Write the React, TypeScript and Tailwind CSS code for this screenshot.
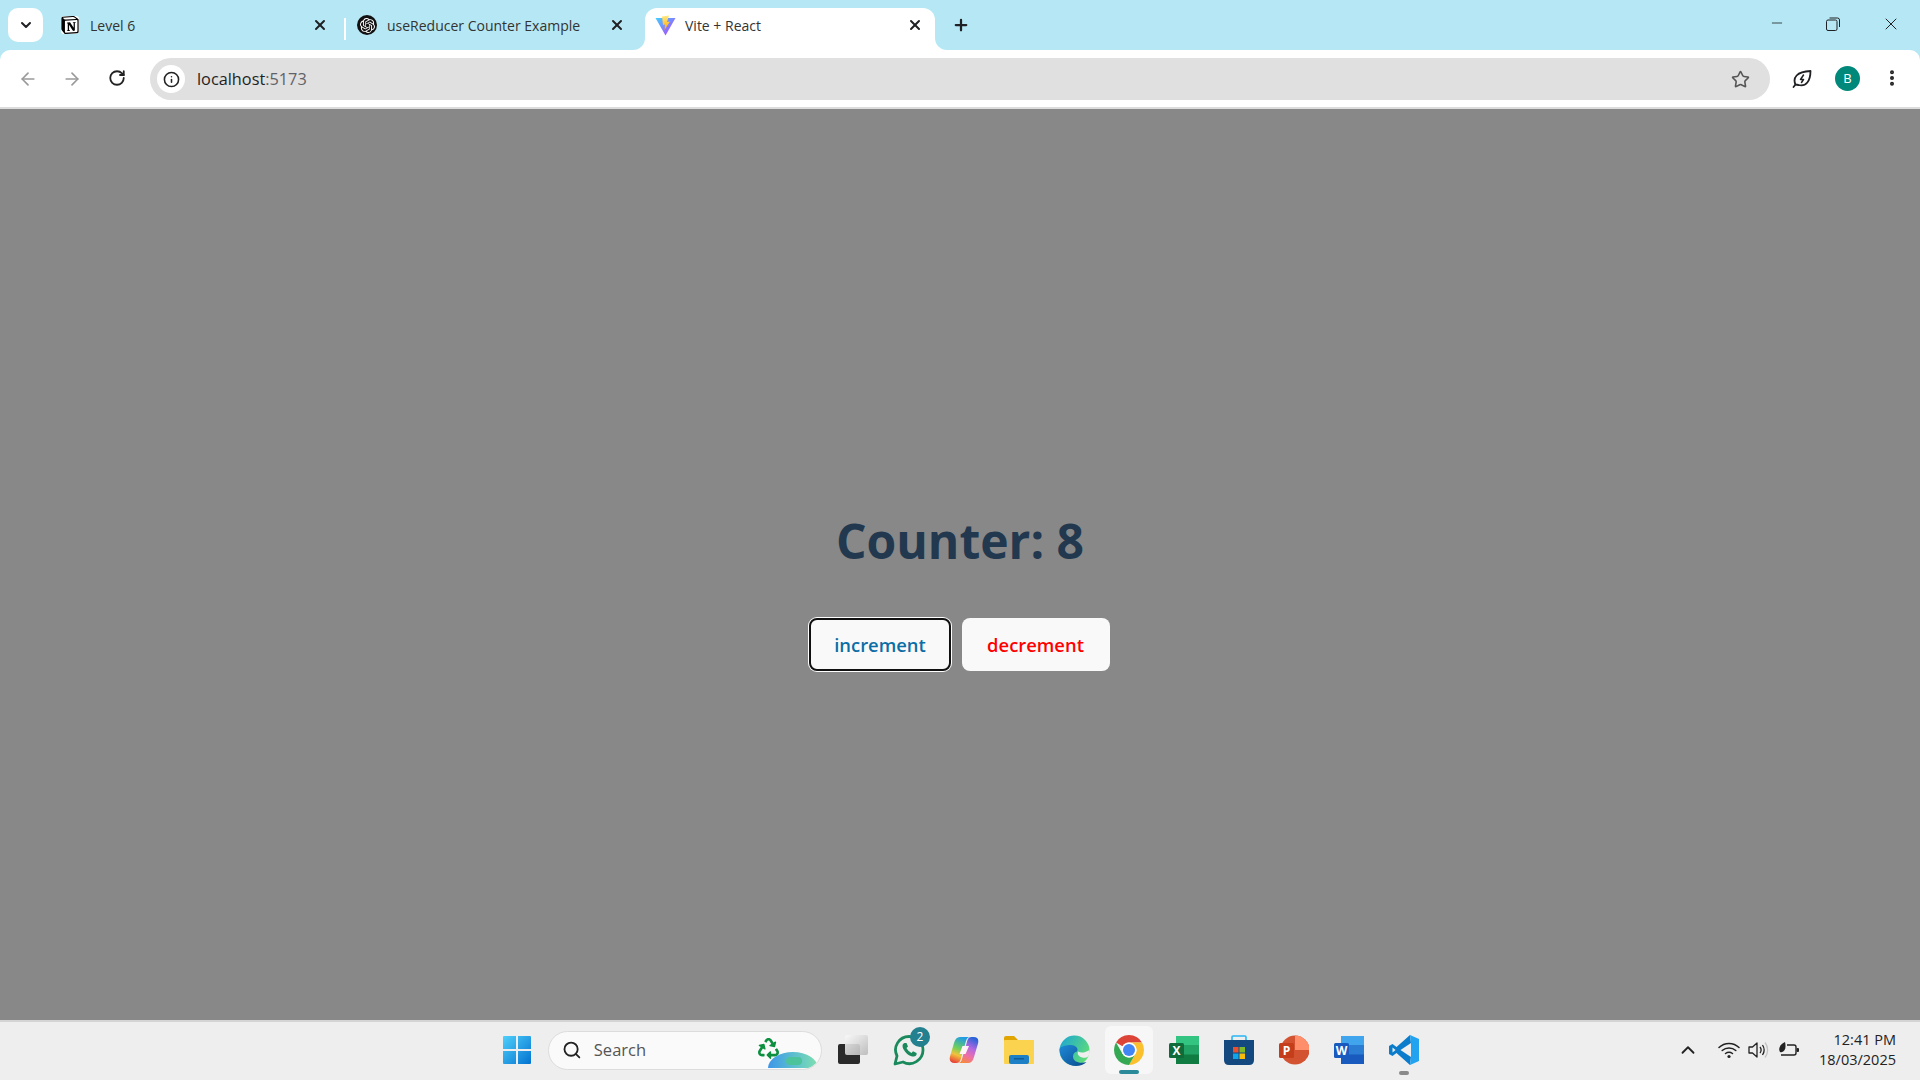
import { ArrowLeft, ArrowRight, ChevronDown, ChevronUp, Info, MoreVertical, Plus, RotateCw, Search, Star, X, Minus } from 'lucide-react';
import { FaRecycle } from 'react-icons/fa';
import { SiNotion, SiOpenai } from 'react-icons/si';

const ViteIcon = () => (
  <svg width="21" height="21" viewBox="0 0 21 21">
    <defs>
      <linearGradient id="vite-a" x1="0" y1="0" x2="1" y2="1">
        <stop offset="0" stopColor="#41d1ff" />
        <stop offset="1" stopColor="#bd34fe" />
      </linearGradient>
      <linearGradient id="vite-b" x1="0" y1="0" x2="0" y2="1">
        <stop offset="0" stopColor="#ffea83" />
        <stop offset="1" stopColor="#ffa800" />
      </linearGradient>
    </defs>
    <path d="M0.5 3 L20.5 3 L10.5 20.5 Z" fill="url(#vite-a)" />
    <path d="M14 0.5 L7 1.5 L8 10 L10 9.5 L9.5 15 L15 6.5 L12 7 Z" fill="url(#vite-b)" />
  </svg>
);

const LeafBolt = () => (
  <svg width="20" height="20" viewBox="0 0 20 20" fill="none" stroke="#202124" strokeWidth="1.8" strokeLinejoin="round" strokeLinecap="round">
    <path d="M3.5 15.5 C0.5 9 4.5 2.5 18.5 2 C18.5 12 14 18 6.5 16 Z" />
    <path d="M1.5 18 L3.5 15.5" />
    <path d="M11.5 6 L8.5 10.5 L11.5 10.5 L9.5 13.5" strokeWidth="1.5" />
  </svg>
);

const RestoreIcon = () => (
  <svg width="14" height="14" viewBox="0 0 14 14" fill="none" stroke="#202124" strokeWidth="1">
    <rect x="0.5" y="3" width="10.5" height="10.5" rx="1.5" />
    <path d="M3.5 1 H11.5 Q13.5 1 13.5 3 V10" />
  </svg>
);

const WinLogo = () => (
  <svg width="30" height="30" viewBox="0 0 30 30">
    <defs>
      <linearGradient id="win" x1="0" y1="0" x2="1" y2="1">
        <stop offset="0" stopColor="#4fd0fb" />
        <stop offset="1" stopColor="#0272d0" />
      </linearGradient>
    </defs>
    <path d="M1 2 Q1 1 2 1 H14 V14 H1 Z M16 1 H28 Q29 1 29 2 V14 H16 Z M1 16 H14 V29 H2 Q1 29 1 28 Z M16 16 H29 V28 Q29 29 28 29 H16 Z" fill="url(#win)" />
  </svg>
);

const TaskView = () => (
  <svg width="32" height="32" viewBox="0 0 32 32">
    <defs>
      <linearGradient id="tv" x1="0" y1="0" x2="1" y2="1">
        <stop offset="0" stopColor="#fafafa" />
        <stop offset="1" stopColor="#b8b8b8" />
      </linearGradient>
    </defs>
    <rect x="1" y="10" width="22" height="20" rx="2" fill="#2a2a2a" />
    <rect x="8" y="1" width="23" height="20" rx="2" fill="url(#tv)" opacity="0.9" />
  </svg>
);

const WhatsappIcon = () => (
  <svg width="32" height="32" viewBox="0 0 32 32" fill="none">
    <path d="M2 30 L4 22 C-0.5 13 6 2.5 16 2.5 C24 2.5 30 9 30 16 C30 26 19 33 10 28 Z" stroke="#1a8a5c" strokeWidth="2.8" strokeLinejoin="round" />
    <path d="M11.5 9 C9 10 9 13 11 16 C13 20 18 23 21 22.5 C23.5 22 24 20 23.5 19 L20 17.2 L18.5 19 C16.5 18 14.5 16 13.5 14 L15 12.5 L13.5 9 Z" fill="#1a8a5c" />
  </svg>
);

const Copilot = () => (
  <svg width="30" height="30" viewBox="0 0 30 30">
    <defs>
      <linearGradient id="cp-a" x1="0.6" y1="0" x2="0.3" y2="1">
        <stop offset="0" stopColor="#1e9be8" />
        <stop offset="0.45" stopColor="#6fd05a" />
        <stop offset="0.7" stopColor="#f2c23c" />
        <stop offset="1" stopColor="#e8443a" />
      </linearGradient>
      <linearGradient id="cp-b" x1="0.7" y1="0" x2="0.3" y2="1">
        <stop offset="0" stopColor="#2563d8" />
        <stop offset="0.4" stopColor="#b468e0" />
        <stop offset="0.7" stopColor="#ee6fa8" />
        <stop offset="1" stopColor="#f58a3c" />
      </linearGradient>
    </defs>
    <path d="M11 2 H21 Q18 2 17 6 L11.5 25 Q10.5 28 7.5 28 H5.5 Q-0.5 28 1 21.5 L5 8 Q6.5 2 11 2 Z" fill="url(#cp-a)" />
    <path d="M19 28 H9 Q12 28 13 24 L18.5 5 Q19.5 2 22.5 2 H24.5 Q30.5 2 29 8.5 L25 22 Q23.5 28 19 28 Z" fill="url(#cp-b)" />
    <path d="M13.5 11 H20 L16.5 19 H10.5 Z" fill="#fff5f5" />
  </svg>
);

const FolderIcon = () => (
  <svg width="30" height="28" viewBox="0 0 30 28">
    <path d="M0 2 Q0 0 2 0 H10 L14 4 H28 Q30 4 30 6 V8 H0 Z" fill="#e0a500" />
    <rect x="0" y="4" width="30" height="24" rx="1" fill="#fcd34f" />
    <rect x="5" y="19" width="20" height="9" rx="2" fill="#1d7fc6" />
    <rect x="10" y="22" width="10" height="1.5" fill="#0f5c96" />
  </svg>
);

const EdgeIcon = () => (
  <svg width="31" height="31" viewBox="0 0 31 31">
    <defs>
      <linearGradient id="edge-a" x1="0" y1="0" x2="1" y2="0.6">
        <stop offset="0" stopColor="#1aa4d8" />
        <stop offset="1" stopColor="#5fdc78" />
      </linearGradient>
      <linearGradient id="edge-b" x1="0" y1="0" x2="1" y2="1">
        <stop offset="0" stopColor="#1f8ad8" />
        <stop offset="1" stopColor="#0a4a8c" />
      </linearGradient>
    </defs>
    <circle cx="15.5" cy="15.5" r="15" fill="url(#edge-a)" />
    <path d="M0.5 14 C0.5 24 8 31 17 31 C21 31 25 29.5 27.5 27 C21 29 14 27 14 21.5 C14 18.5 16 17 18 16.5 C20 13 16 10 12 10 C7 10 2 11 0.5 14 Z" fill="url(#edge-b)" />
    <path d="M30.5 18 C30 22.5 26.5 23.5 23 22.5 C19.5 21.5 18 19 19 16.5 C22 18.5 27 17.5 30.5 15 Z" fill="#eeeeee" />
  </svg>
);

const ChromeIcon = () => (
  <svg width="30" height="30" viewBox="4 4 40 40">
    <path d="M24 4 A20 20 0 0 1 41.3 14 L24 14 A10 10 0 0 0 15.3 19 L6.7 14 A20 20 0 0 1 24 4 Z" fill="#db4437" />
    <path d="M41.3 14 A20 20 0 0 1 24 44 L32.7 29 A10 10 0 0 0 24 14 Z" fill="#fbc02d" />
    <path d="M24 44 A20 20 0 0 1 6.7 14 L15.3 29 A10 10 0 0 0 32.7 29 Z" fill="#34a853" />
    <circle cx="24" cy="24" r="10" fill="#ffffff" />
    <circle cx="24" cy="24" r="8" fill="#4285f4" />
  </svg>
);

const OfficeIcon = ({ letter, bg, c1, c2, c3 }: { letter: string; bg: string; c1: string; c2: string; c3: string }) => (
  <svg width="30" height="30" viewBox="0 0 30 30">
    <rect x="7" y="1" width="23" height="9.5" fill={c1} />
    <rect x="7" y="10" width="23" height="10" fill={c2} />
    <rect x="7" y="19.5" width="23" height="9.5" fill={c3} />
    <rect x="0" y="8" width="15" height="15" rx="1.5" fill={bg} />
    <text x="7.5" y="20" fontSize="12" fontWeight="700" fill="#ffffff" textAnchor="middle" fontFamily="'Open Sans', sans-serif">
      {letter}
    </text>
  </svg>
);

const StoreIcon = () => (
  <svg width="30" height="30" viewBox="0 0 30 30">
    <path d="M8 5 V2 Q8 1 9 1 H21 Q22 1 22 2 V5" fill="none" stroke="#29b6f6" strokeWidth="1.6" />
    <path d="M0 5 H30 V25 Q30 30 25 30 H5 Q0 30 0 25 Z" fill="#14497f" />
    <rect x="9" y="12" width="5.5" height="5.5" fill="#e8502e" />
    <rect x="15.5" y="12" width="5.5" height="5.5" fill="#7fba2a" />
    <rect x="9" y="18.5" width="5.5" height="5.5" fill="#0ea5e9" />
    <rect x="15.5" y="18.5" width="5.5" height="5.5" fill="#fbbc09" />
  </svg>
);

const PptIcon = () => (
  <svg width="30" height="30" viewBox="0 0 30 30">
    <circle cx="16" cy="15" r="14.5" fill="#d35230" />
    <path d="M16 0.5 A14.5 14.5 0 0 1 30.5 15 H16 Z" fill="#ff8f6b" />
    <rect x="0" y="8" width="15" height="15" rx="1.5" fill="#c43e1c" />
    <text x="7.5" y="20" fontSize="12" fontWeight="700" fill="#ffffff" textAnchor="middle" fontFamily="'Open Sans', sans-serif">
      P
    </text>
  </svg>
);

const VsCodeIcon = () => (
  <svg width="30" height="30" viewBox="0 0 30 30">
    <path d="M21 0 L7.5 12 L3.5 9 L0 11 V19 L3.5 21 L7.5 18 L21 30 L22 22 L11.5 15 L22 8 Z" fill="#0b7ccb" />
    <path d="M21 0 L30 4 V26 L21 30 L22 22 V8 Z" fill="#22a3f0" />
    <path d="M3.5 12.5 V17.5 L6.5 15 Z" fill="#eeeeee" />
  </svg>
);

const WifiIcon = () => (
  <svg width="22" height="18" viewBox="0 0 22 18" fill="none" stroke="#222" strokeWidth="1.5" strokeLinecap="round">
    <path d="M1 6.5 C6.5 1 15.5 1 21 6.5" />
    <path d="M4.2 9.5 C8 6 14 6 17.8 9.5" />
    <path d="M7.5 12.5 C9.5 11 12.5 11 14.5 12.5" />
    <circle cx="11" cy="15.5" r="1.6" fill="#222" stroke="none" />
  </svg>
);

const VolumeIcon = () => (
  <svg width="21" height="18" viewBox="0 0 21 18" fill="none" stroke="#222" strokeWidth="1.3" strokeLinejoin="round">
    <path d="M1 6 H4.5 L9 2 V16 L4.5 12 H1 Z" />
    <path d="M12 6 C13.5 8 13.5 10 12 12" />
    <path d="M14.5 4 C16.5 7 16.5 11 14.5 14" />
    <path d="M17 1.5 C20.5 6 20.5 12 17 16.5" stroke="#c4c4c4" />
  </svg>
);

const BatteryLeaf = () => (
  <svg width="22" height="18" viewBox="0 0 22 18" fill="none" stroke="#222" strokeWidth="1.4">
    <path d="M9 4 H16 Q18 4 18 6 V12 Q18 14 16 14 H3" />
    <rect x="18.5" y="7" width="2.5" height="4" rx="1" fill="#222" stroke="none" />
    <path d="M7 1 C2 3 0 8 2 11 C5 12 9 9 7 1 Z" fill="#222" stroke="none" />
  </svg>
);

const Flare = ({ side }: { side: 'left' | 'right' }) => (
  <div className={side === 'left' ? 'absolute bottom-0 -left-[12px] h-[12px] w-[12px] bg-white' : 'absolute bottom-0 -right-[12px] h-[12px] w-[12px] bg-white'}>
    <div className={side === 'left' ? 'h-full w-full rounded-br-[12px] bg-[#b5e8f4]' : 'h-full w-full rounded-bl-[12px] bg-[#b5e8f4]'} />
  </div>
);

const App = () => {
  return (
    <div className="flex h-screen w-full flex-col overflow-hidden bg-[#b5e8f4] font-['Open_Sans','Noto_Sans',sans-serif] text-[#202124]">
      {/* tab strip */}
      <div className="flex h-[50px] shrink-0 items-end">
        <div className="mb-[8px] ml-[8px] flex h-[34px] w-[35px] items-center justify-center rounded-[10px] bg-white">
          <ChevronDown size={16} strokeWidth={3} />
        </div>

        <div className="ml-[18px] flex h-[42px] w-[283px] items-center pb-[8px]">
          <SiNotion size={18} className="rounded-[3px] bg-white text-black" />
          <span className="ml-[11px] text-[14px] text-[#333]">Level 6</span>
          <X size={16} strokeWidth={3} className="ml-auto mr-[16px]" />
        </div>

        <div className="mb-[10px] h-[22px] w-[2px] bg-white" />

        <div className="flex h-[42px] w-[299px] items-center pb-[8px] pl-[11px]">
          <div className="flex h-[20px] w-[20px] items-center justify-center rounded-full bg-[#111]">
            <SiOpenai size={15} className="text-white" />
          </div>
          <span className="ml-[10px] text-[14px] text-[#333]">useReducer Counter Example</span>
          <X size={16} strokeWidth={3} className="ml-auto mr-[20px]" />
        </div>

        <div className="relative flex h-[42px] w-[290px] items-center rounded-t-[12px] bg-white pb-[8px] pl-[10px]">
          <Flare side="left" />
          <Flare side="right" />
          <ViteIcon />
          <span className="ml-[9px] text-[14px] text-[#333]">Vite + React</span>
          <X size={16} strokeWidth={3} className="ml-auto mr-[12px]" />
        </div>

        <div className="mb-[8px] ml-[17px] flex h-[34px] items-center">
          <Plus size={18} strokeWidth={3} />
        </div>

        <div className="ml-auto flex h-[50px] items-start pt-[14px]">
          <Minus size={16} strokeWidth={1.2} className="mt-[1px]" />
          <div className="ml-[41px] mt-[3px]">
            <RestoreIcon />
          </div>
          <X size={20} strokeWidth={1.2} className="ml-[41px] mr-[19px]" />
        </div>
      </div>

      {/* toolbar */}
      <div className="flex h-[59px] shrink-0 items-start rounded-t-[10px] border-b-2 border-[#dcdcdc] bg-white pt-[8px]">
        <ArrowLeft size={20} strokeWidth={2} className="ml-[18px] mt-[11px] text-[#9a9a9a]" />
        <ArrowRight size={20} strokeWidth={2} className="ml-[24px] mt-[11px] text-[#9a9a9a]" />
        <RotateCw size={18} strokeWidth={2.4} className="ml-[26px] mt-[11px] text-[#222]" />
        <div className="ml-[24px] flex h-[42px] w-[1620px] items-center rounded-full bg-[#e0e0e0] pl-[7px] pr-[20px]">
          <div className="flex h-[28px] w-[28px] items-center justify-center rounded-full bg-white">
            <Info size={17} strokeWidth={2.2} className="text-[#222]" />
          </div>
          <span className="ml-[12px] text-[16.3px] text-[#1f1f1f]">
            localhost<span className="text-[#5f6368]">:5173</span>
          </span>
          <Star size={19} strokeWidth={2} className="ml-auto text-[#555]" />
        </div>
        <div className="ml-[22px] mt-[11px]">
          <LeafBolt />
        </div>
        <div className="ml-[23px] mt-[8px] flex h-[25px] w-[25px] items-center justify-center rounded-full bg-[#00897b] text-[13px] text-white">
          B
        </div>
        <MoreVertical size={20} strokeWidth={2.8} className="ml-[22px] mt-[10px] text-[#222]" />
      </div>

      {/* page */}
      <main className="flex min-h-0 flex-1 flex-col items-center bg-[#888888] pt-[396px]">
        <h1 className="text-center text-[48px] leading-[72px] font-bold text-[#22384f]">Counter: 8</h1>
        <div className="mr-[2px] mt-[41px] flex items-center gap-[11px]">
          <button className="h-[53px] w-[142px] rounded-[8px] border-2 border-[#111] bg-[#f9f9f9] pl-[1px] pt-[1px] text-[18.4px] font-semibold text-[#0b6ea6] ring-1 ring-white">
            increment
          </button>
          <button className="h-[53px] w-[148px] rounded-[8px] bg-[#f9f9f9] pt-[1px] text-[18.4px] font-semibold text-[#ff0000]">decrement</button>
        </div>
      </main>

      {/* taskbar */}
      <footer className="flex h-[60px] shrink-0 items-center border-t-2 border-[#d4d4d4] bg-[#eeeeee] pb-[2px] pl-[502px]">
        <WinLogo />
        <div className="ml-[16px] flex h-[39px] w-[274px] items-center overflow-hidden rounded-full border border-[#dcdcdc] bg-[#fafafa] pl-[13px]">
          <Search size={22} strokeWidth={2.2} className="text-[#222]" />
          <span className="ml-[12px] text-[16.5px] text-[#555]">Search</span>
          <div className="relative ml-[111px] h-[37px] w-[71px]">
            <FaRecycle size={21} className="ml-[1px] mt-[6px] text-[#0c8f3f]" />
            <div className="absolute bottom-[1px] left-[11px] h-[16px] w-[50px] overflow-hidden rounded-[50%_50%_0_0/100%_100%_0_0] bg-gradient-to-r from-[#3f96e8] to-[#7fe0ae]">
              <div className="ml-[18px] mt-[5px] h-[8px] w-[16px] rounded-full bg-[#4cc39a]" />
            </div>
          </div>
        </div>
        <div className="ml-[15px]">
          <TaskView />
        </div>
        <div className="relative ml-[24px]">
          <WhatsappIcon />
          <div className="absolute -right-[5px] -top-[7px] flex h-[20px] w-[20px] items-center justify-center rounded-full bg-[#22808f] text-[12px] text-white">
            2
          </div>
        </div>
        <div className="ml-[24px]">
          <Copilot />
        </div>
        <div className="ml-[25px]">
          <FolderIcon />
        </div>
        <div className="ml-[25px]">
          <EdgeIcon />
        </div>
        <div className="relative ml-[15px] flex h-[48px] w-[48px] items-center justify-center rounded-[6px] bg-[#f7f7f7]">
          <ChromeIcon />
          <div className="absolute bottom-0 left-[14px] h-[4px] w-[20px] rounded-full bg-[#2a8a9a]" />
        </div>
        <div className="ml-[16px]">
          <OfficeIcon letter="X" bg="#0f6b3a" c1="#33c481" c2="#21a366" c3="#107c41" />
        </div>
        <div className="ml-[25px]">
          <StoreIcon />
        </div>
        <div className="ml-[25px]">
          <PptIcon />
        </div>
        <div className="ml-[25px]">
          <OfficeIcon letter="W" bg="#185abd" c1="#41a5ee" c2="#2b7cd3" c3="#185abd" />
        </div>
        <div className="relative ml-[25px]">
          <VsCodeIcon />
          <div className="absolute -bottom-[10px] left-[10px] h-[4px] w-[10px] rounded-full bg-[#8a8a8a]" />
        </div>

        <ChevronUp size={22} strokeWidth={2} className="ml-[258px] text-[#222]" />
        <div className="ml-[19px]">
          <WifiIcon />
        </div>
        <div className="ml-[8px]">
          <VolumeIcon />
        </div>
        <div className="ml-[9px]">
          <BatteryLeaf />
        </div>
        <div className="ml-auto mr-[24px] text-right text-[14.5px] leading-[20px] text-[#222]">
          <div>12:41 PM</div>
          <div>18/03/2025</div>
        </div>
      </footer>
    </div>
  );
};

export default App;
